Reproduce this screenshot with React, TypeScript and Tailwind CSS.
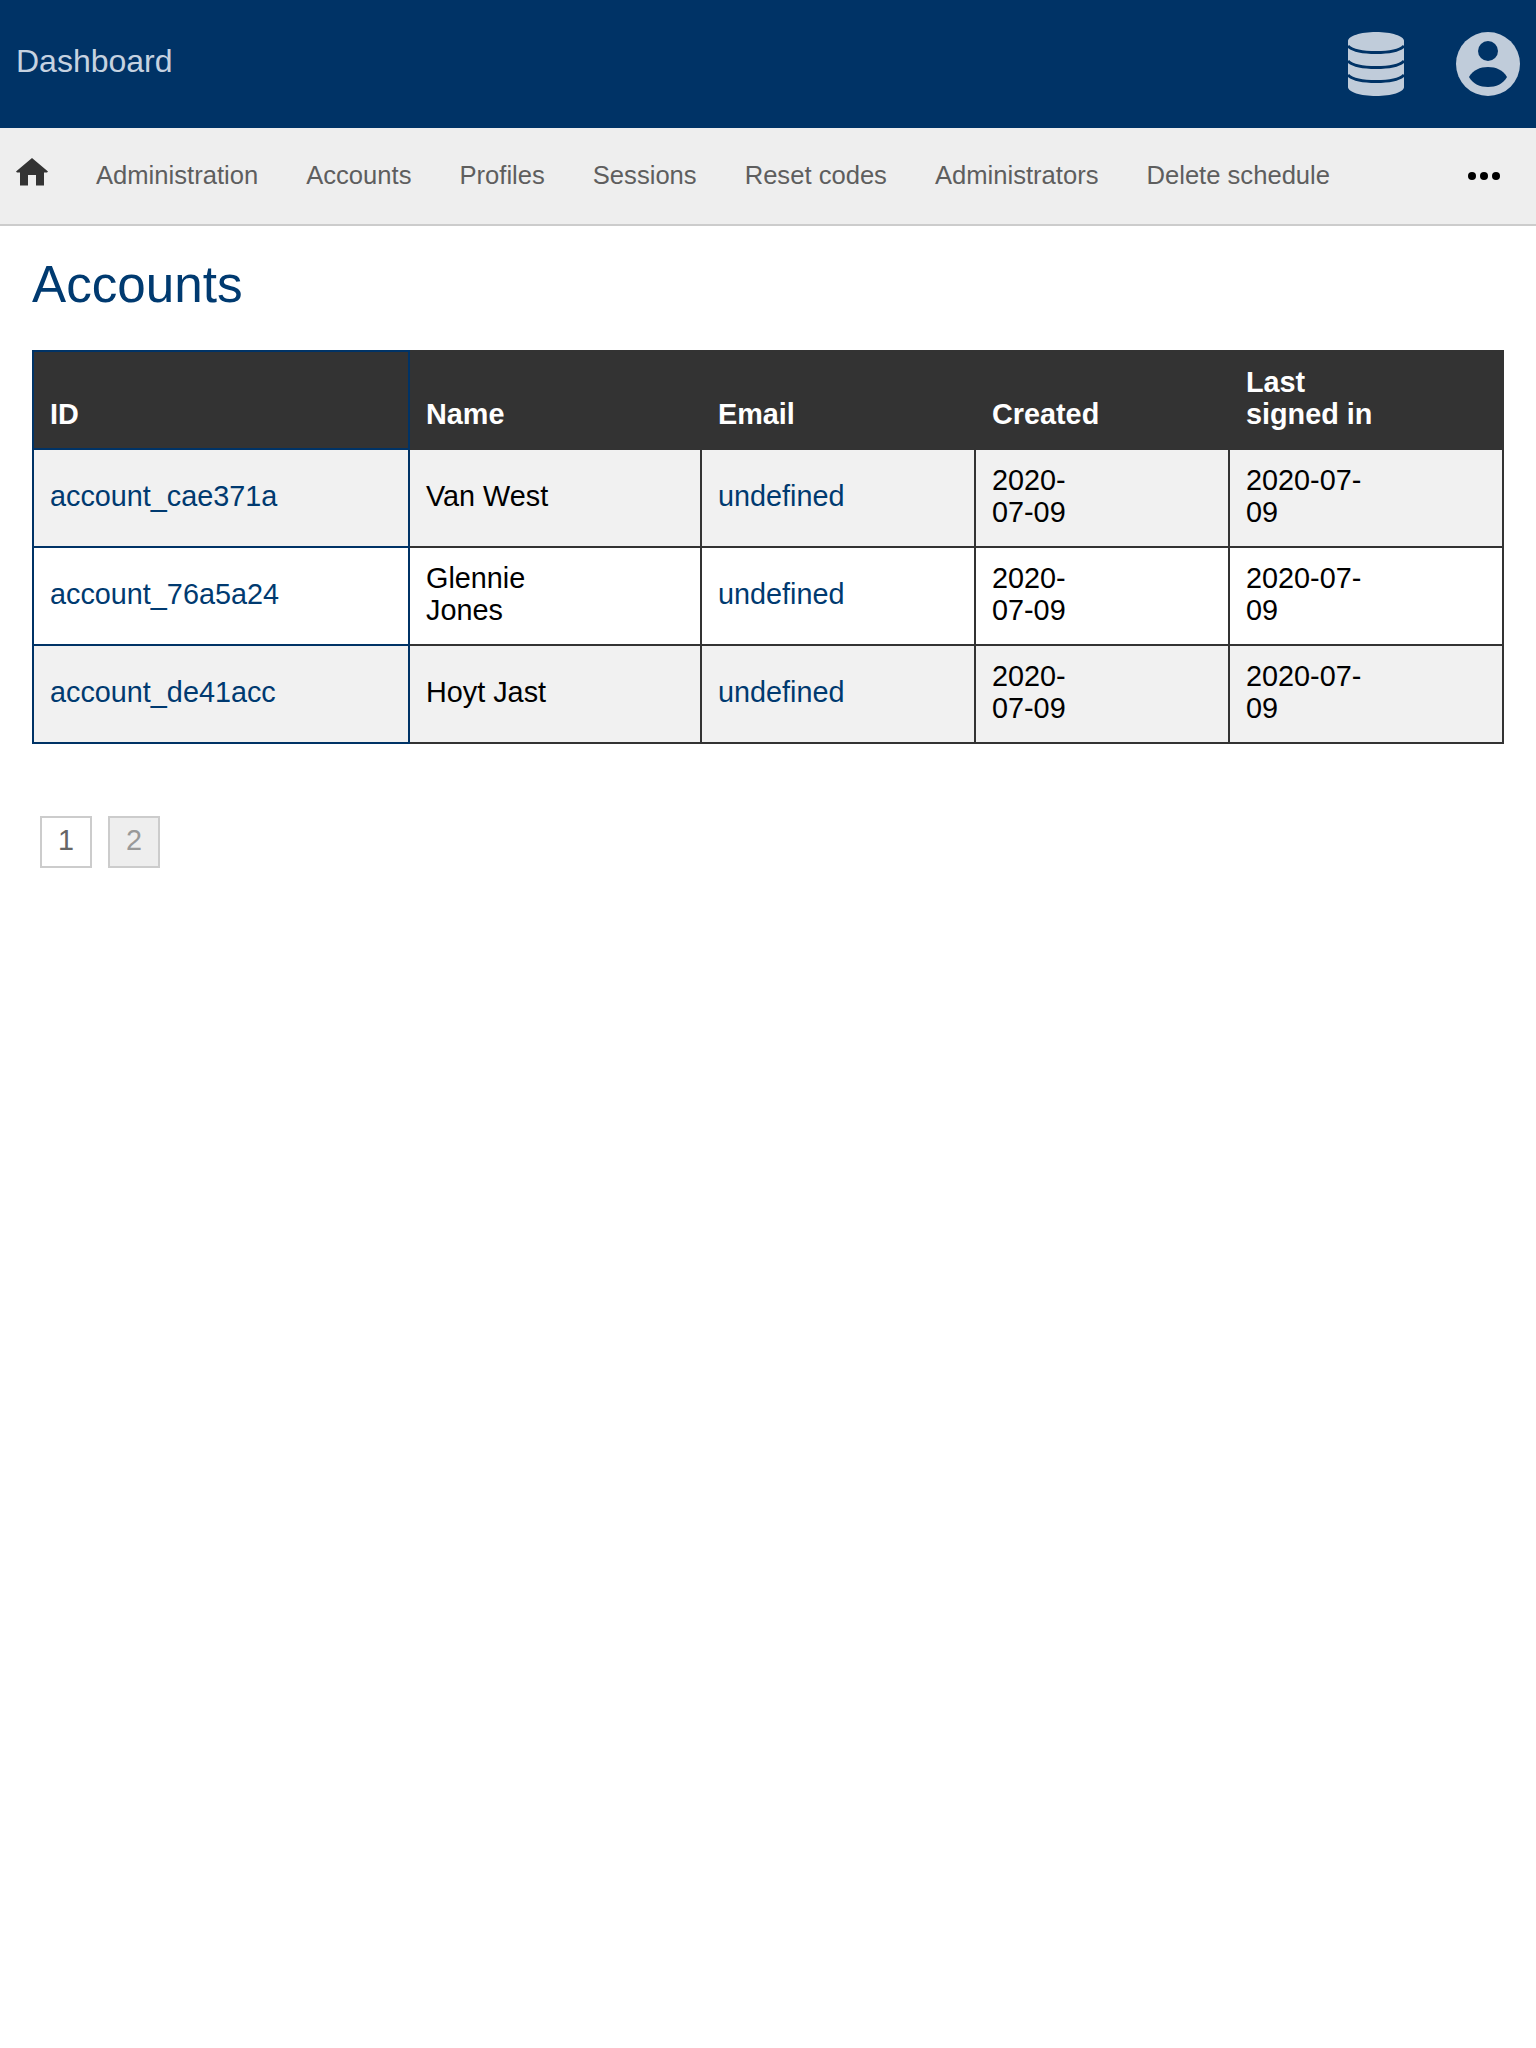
const navItems = ['Administration', 'Accounts', 'Profiles', 'Sessions', 'Reset codes', 'Administrators', 'Delete schedule']

const rows = [
    { id: 'account_cae371a', name: 'Van West' },
    { id: 'account_76a5a24', name: 'Glennie Jones' },
    { id: 'account_de41acc', name: 'Hoyt Jast' },
]

const DatabaseIcon = () => (
    <svg width="56" height="64" viewBox="0 0 56 64" className="text-[#c0ccda]">
        <path d="M0 9C0 4 12.5 0 28 0s28 4 28 9v46c0 5-12.5 9-28 9S0 60 0 55z" fill="currentColor" />
        <g fill="none" stroke="#003366" strokeWidth="3">
            <path d="M0 14C4 18 14 20.500 28 20.500S52 18 56 14" />
            <path d="M0 29C4 33 14 35.500 28 35.500S52 33 56 29" />
            <path d="M0 43C4 47 14 49.500 28 49.500S52 47 56 43" />
        </g>
    </svg>
)

const UserIcon = () => (
    <svg width="64" height="64" viewBox="0 0 64 64">
        <circle cx="32" cy="32" r="32" fill="#c0ccda" />
        <circle cx="32" cy="19" r="10" fill="#003366" />
        <path d="M13 45C17 38 24 35 32 35C40 35 47 38 51 45C47 52 40 55 32 55C24 55 17 52 13 45z" fill="#003366" />
    </svg>
)

const HomeIcon = () => (
    <svg width="32" height="28" viewBox="0 0 32 28">
        <path d="M16 0L32 13.500L31 14.500H28V27.500H20V17H12V27.500H4V14.500H1L0 13.500z" fill="#333333" />
    </svg>
)

const DotsIcon = () => (
    <svg width="32" height="8" viewBox="0 0 32 8">
        <circle cx="4" cy="4" r="4" fill="#000" />
        <circle cx="16" cy="4" r="4" fill="#000" />
        <circle cx="28" cy="4" r="4" fill="#000" />
    </svg>
)

export default function App() {
    return (
        <div className="min-h-[2048px] bg-white font-['Liberation_Sans',Arial,sans-serif] text-black">
            <header className="flex h-32 items-center justify-between bg-[#003366] pl-4 pr-4">
                <span className="pb-1.5 text-[32px] text-[#c6d2e0]">Dashboard</span>
                <div className="flex items-center gap-[52px]">
                    <DatabaseIcon />
                    <UserIcon />
                </div>
            </header>
            <nav className="flex h-[98px] items-center justify-between border-b-2 border-[#cccccc] bg-[#eeeeee] pl-4 pr-9">
                <div className="flex items-center gap-12">
                    <a className="pb-2"><HomeIcon /></a>
                    {navItems.map((item) => (
                        <a key={item} className="pb-0.5 text-[25.6px] text-[#5e5e5e]">{item}</a>
                    ))}
                </div>
                <DotsIcon />
            </nav>
            <main className="px-8">
                <h1 className="mt-[29px] mb-[35px] text-[51.2px] leading-[60px] text-[#003a70]">Accounts</h1>
                <table className="w-full table-fixed border-collapse text-[28.8px] leading-8">
                    <thead>
                        <tr className="bg-[#333333] text-left align-bottom font-bold text-white">
                            <th className="w-[376px] border-2 border-[#003366] px-4 pt-[14px] pb-[18px]">ID</th>
                            <th className="w-[292px] border-2 border-[#333333] px-4 pt-[14px] pb-[18px]">Name</th>
                            <th className="w-[274px] border-2 border-[#333333] px-4 pt-[14px] pb-[18px]">Email</th>
                            <th className="w-[254px] border-2 border-[#333333] px-4 pt-[14px] pb-[18px]">Created</th>
                            <th className="border-2 border-[#333333] px-4 pt-[14px] pb-[18px]">Last<br />signed in</th>
                        </tr>
                    </thead>
                    <tbody>
                        {rows.map((row, i) => (
                            <tr key={row.id} className={i % 2 === 0 ? 'bg-[#f1f1f1]' : 'bg-white'}>
                                <td className="border-2 border-[#003366] px-4 pt-[14px] pb-[18px] text-[#003a70]">{row.id}</td>
                                <td className="border-2 border-[#333333] px-4 pt-[14px] pb-[18px]">
                                    {row.name === 'Glennie Jones' ? <>Glennie<br />Jones</> : row.name}
                                </td>
                                <td className="border-2 border-[#333333] px-4 pt-[14px] pb-[18px] text-[#003a70]">undefined</td>
                                <td className="border-2 border-[#333333] px-4 pt-[14px] pb-[18px]">2020-<br />07-09</td>
                                <td className="border-2 border-[#333333] px-4 pt-[14px] pb-[18px]">2020-07-<br />09</td>
                            </tr>
                        ))}
                    </tbody>
                </table>
                <div className="mt-[72px] flex gap-4 pl-2">
                    <a className="flex h-[52px] w-[52px] items-center justify-center border-2 border-[#cccccc] pb-0.5 text-[28.8px] text-[#666666]">1</a>
                    <a className="flex h-[52px] w-[52px] items-center justify-center border-2 border-[#cccccc] bg-[#eeeeee] pb-0.5 text-[28.8px] text-[#999999]">2</a>
                </div>
            </main>
        </div>
    )
}
